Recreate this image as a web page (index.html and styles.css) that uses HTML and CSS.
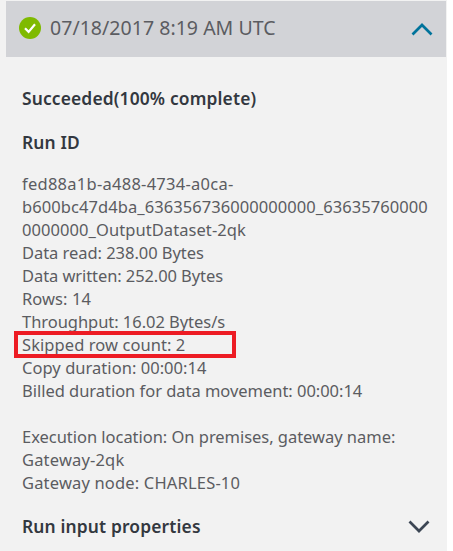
FILE: index.html
```html
<!DOCTYPE html>
<html lang="en">
<head>
<meta charset="utf-8">
<title>Run details</title>
<link rel="stylesheet" href="styles.css">
</head>
<body>
<main class="panel">
  <header class="run-header">
    <svg class="status" viewBox="0 0 22 22"><circle cx="11" cy="11" r="11" fill="#7fba00"/><path d="M6 11.3 9.6 14.9 16 7.2" fill="none" stroke="#fff" stroke-width="2.2"/></svg>
    <h1 class="run-time">07/18/2017 8:19 AM UTC</h1>
    <svg class="chevron up" viewBox="0 0 22 13"><path d="M1.5 11.5 11 2 20.5 11.5"/></svg>
  </header>
  <section class="details">
    <h2 class="heading">Succeeded(100% complete)</h2>
    <h2 class="heading">Run ID</h2>
    <div class="lines">
      <div class="id-start">fed88a1b-a488-4734-a0ca-</div>
      <div class="id">b600bc47d4ba_636356736000000000_63635760000</div>
      <div class="id">0000000_OutputDataset-2qk</div>
      <div class="tight">Data read: 238.00 Bytes</div>
      <div class="tighter">Data written: 252.00 Bytes</div>
      <div class="id">Rows: 14</div>
      <div class="tight">Throughput: 16.02 Bytes/s</div>
      <div class="id highlight">Skipped row count: 2</div>
      <div class="loose">Copy duration: 00:00:14</div>
      <div class="billed">Billed duration for data movement: 00:00:14</div>
      <div class="location">Execution location: On premises, gateway name:</div>
      <div class="gateway">Gateway-2qk</div>
      <div class="gateway">Gateway node: CHARLES-10</div>
    </div>
    <div class="input-row">
      <h2 class="heading">Run input properties</h2>
      <svg class="chevron down" viewBox="0 0 22 13"><path d="M1.5 1.5 11 11 20.5 1.5"/></svg>
    </div>
  </section>
</main>
</body>
</html>
```
FILE: styles.css
```css
body { margin: 0; background: #fff; font-family: "Noto Sans", "Open Sans", sans-serif; color: #5b5c61; }
.panel { display: flow-root; width: 447px; height: 551px; background: #f2f2f2; overflow: hidden; }
.run-header { display: flex; align-items: center; box-sizing: border-box; width: 440px; height: 56px; margin: 1px 0 0 6px; padding: 0 13px 3px 13px; background: #d2d3d7; }
.status { width: 22px; height: 22px; margin-right: 9px; }
.run-time { flex: 1; margin: 0; font-size: 19.5px; font-weight: 400; line-height: 53px; letter-spacing: 0.035px; }
.chevron { width: 22px; height: 13px; fill: none; stroke-width: 2.7; }
.up { margin-top: 3px; stroke: #00739b; }
.down { stroke: #3c4654; }
.details { padding: 30px 17px 0 22px; }
.heading { margin: 0 0 21px; font-size: 17.4px; font-weight: 600; line-height: 23px; letter-spacing: 0.15px; color: #333840; }
.lines { margin-top: -3px; font-size: 16.5px; line-height: 23px; white-space: nowrap; }
.id-start { letter-spacing: 0.258px; }
.id { letter-spacing: 0.07px; }
.tight { letter-spacing: -0.045px; }
.tighter { letter-spacing: -0.084px; }
.loose { letter-spacing: 0.039px; }
.billed { letter-spacing: -0.03px; }
.gateway { letter-spacing: 0.17px; }
.location { margin-top: 23px; letter-spacing: -0.035px; }
.highlight { position: relative; }
.highlight::after { content: ""; position: absolute; box-sizing: border-box; top: -2px; left: -8px; width: 222px; height: 27px; border: 4px solid #ed1c24; }
.input-row { display: flex; justify-content: space-between; align-items: center; margin-top: 21px; }
.input-row .heading { margin: 0; }
```
